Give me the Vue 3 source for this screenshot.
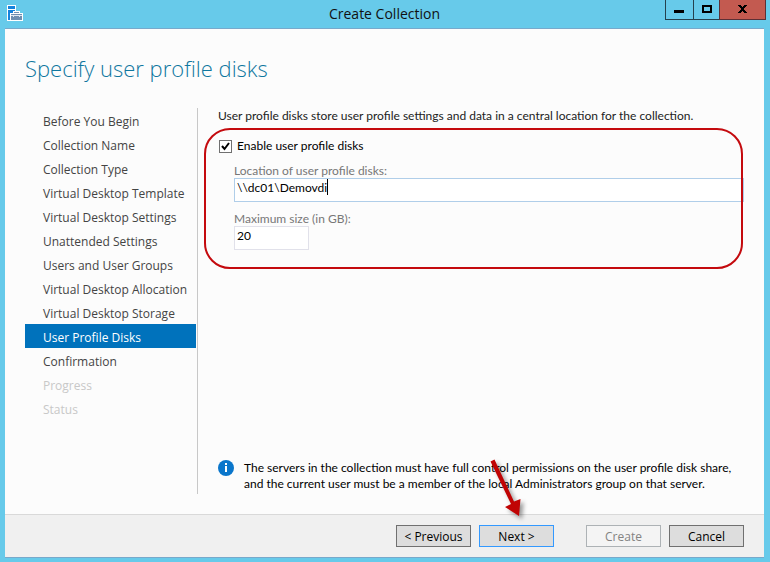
<script setup>
import { ref } from 'vue'

const steps = [
  { name: 'Before You Begin' },
  { name: 'Collection Name' },
  { name: 'Collection Type' },
  { name: 'Virtual Desktop Template' },
  { name: 'Virtual Desktop Settings' },
  { name: 'Unattended Settings' },
  { name: 'Users and User Groups' },
  { name: 'Virtual Desktop Allocation' },
  { name: 'Virtual Desktop Storage' },
  { name: 'User Profile Disks', current: true },
  { name: 'Confirmation' },
  { name: 'Progress', pending: true },
  { name: 'Status', pending: true },
]

const enabled = ref(true)
const location = ref('\\\\dc01\\Demovdi')
const maxSize = ref('20')
</script>

<template>
  <div class="window">
    <header class="titlebar">
      <svg class="app-icon" width="18" height="18" viewBox="0 0 18 18" aria-hidden="true">
        <path d="M1 1h9v6h4v2h3v8H1z" fill="#fff" />
        <path d="M2 2h7v3H2zM2 6h7v1H7v2H4v7H2z" fill="#1583dc" />
        <path d="M5 10h11v6H5zM8 8h5v1H8z" fill="#6f8fb0" />
        <path d="M5 11h11v1H5zM7 12h1v1H7zM13 12h1v1h-1z" fill="#dfe9f2" />
      </svg>
      <span class="title">Create Collection</span>
      <div class="controls">
        <button type="button" class="control" aria-label="Minimize">
          <svg width="27" height="19" viewBox="0 0 27 19"><path d="M8 10h10v3H8z" fill="#000" /></svg>
        </button>
        <button type="button" class="control" aria-label="Maximize">
          <svg width="25" height="19" viewBox="0 0 25 19"><path d="M8 5h10v8H8zM10 7v4h6V7z" fill="#000" fill-rule="evenodd" /></svg>
        </button>
        <button type="button" class="control close" aria-label="Close">
          <svg width="45" height="19" viewBox="0 0 45 19">
            <path d="M18 5h3v1h1v1h1V6h1V5h3v1h-1v1h-1v1h-1v2h1v1h1v1h1v1h-3v-1h-1v-1h-1v1h-1v1h-3v-1h1v-1h1v-1h1V8h-1V7h-1V6h-1z" fill="#000" />
          </svg>
        </button>
      </div>
    </header>

    <div class="panel">
      <h1>Specify user profile disks</h1>
      <div class="body">
        <nav aria-label="Steps">
          <ol>
            <li v-for="s in steps" :key="s.name" :class="{ current: s.current, pending: s.pending }">{{ s.name }}</li>
          </ol>
        </nav>
        <main>
          <p class="intro">User profile disks store user profile settings and data in a central location for the collection.</p>
          <section class="settings">
            <label class="enable">
              <span class="tick">
                <input v-model="enabled" type="checkbox" />
                <svg v-if="enabled" width="13" height="13" viewBox="0 0 13 13"><path d="M3 6l2.500 3L10 3" fill="none" stroke="#000" stroke-width="2" /></svg>
              </span>
              Enable user profile disks
            </label>
            <div class="field">
              <label for="location">Location of user profile disks:</label>
              <div class="entry">
                <input id="location" v-model="location" type="text" class="focused" />
                <span class="caret"></span>
              </div>
            </div>
            <div class="field">
              <label for="size">Maximum size (in GB):</label>
              <input id="size" v-model="maxSize" type="text" class="short" />
            </div>
            <div class="outline"></div>
          </section>
          <div class="notice">
            <svg width="16" height="16" viewBox="0 0 16 16" aria-hidden="true">
              <circle cx="8" cy="8" r="8" fill="#0a76cb" />
              <path d="M7 3h2v2H7zM7 6h2v6H7z" fill="#fff" />
            </svg>
            <p>The servers in the collection must have full control permissions on the user profile disk share, and the current user must be a member of the local Administrators group on that server.</p>
          </div>
        </main>
      </div>
      <footer>
        <button type="button" class="action">&lt; Previous</button>
        <div class="next">
          <button type="button" class="action default">Next &gt;</button>
          <svg class="arrow" width="48" height="72" viewBox="0 0 48 72" aria-hidden="true">
            <path d="M10.500 7.500L14.500 5.500L34 47.500L40.500 45L39 62L25 53L31 50z" fill="#c00404" />
          </svg>
        </div>
        <button type="button" class="action create" disabled>Create</button>
        <button type="button" class="action">Cancel</button>
      </footer>
    </div>
  </div>
</template>

<style>
body {
  margin: 0;
}
</style>

<style scoped>
* {
  box-sizing: border-box;
}
.window {
  display: flex;
  flex-direction: column;
  min-height: 100vh;
  padding: 0 6px 4px 5px;
  background: #67caea;
  font-family: "Open Sans", "Noto Sans", sans-serif;
  font-size: 12px;
  line-height: 16px;
  color: #222;
}
button,
input {
  font: inherit;
  margin: 0;
}
.titlebar {
  display: grid;
  grid-template-columns: 1fr auto 1fr;
  height: 28px;
}
.app-icon {
  margin: 4px 0 0 1px;
}
.title {
  font-size: 14px;
  line-height: 28px;
  color: #111;
}
.controls {
  display: flex;
  justify-self: end;
  align-self: start;
  margin-right: -2px;
}
.control {
  display: flex;
  padding: 0;
  border: solid #25414d;
  border-width: 0 0 1px 1px;
  background: transparent;
}
.close {
  border-right-width: 1px;
  border-color: #5c3036;
  background: #c35a50;
}
.panel {
  flex: 1;
  display: flex;
  flex-direction: column;
  border-top: 1px solid #78a9cb;
  border-bottom: 1px solid #78a9cb;
  background: #fcfcfc;
}
h1 {
  margin: 23px 20px 24px;
  font-size: 22px;
  line-height: 32px;
  font-weight: 300;
  color: #0f779f;
}
.body {
  flex: 1;
  display: grid;
  grid-template-columns: 173px 1fr;
  margin: 0 20px 20px;
}
nav {
  padding-right: 1px;
  border-right: 1px solid #c8c8c8;
}
ol {
  margin: 0;
  padding: 0;
  list-style: none;
}
li {
  padding: 4px 0 0 18px;
  line-height: 20px;
  color: #444;
  white-space: nowrap;
}
.current {
  background: #0072bc;
  color: #fff;
}
.pending {
  color: #c8c8c8;
}
main {
  display: flex;
  flex-direction: column;
  padding-left: 20px;
  font-family: Lato, "Open Sans", sans-serif;
}
p {
  margin: 0;
}
.intro {
  white-space: nowrap;
}
.settings {
  position: relative;
  display: flex;
  flex-direction: column;
  gap: 9px;
  margin-top: 14px;
  color: #000;
}
.enable {
  display: flex;
  align-items: center;
  gap: 5px;
  padding-left: 1px;
}
.tick {
  position: relative;
  display: flex;
}
.tick input {
  appearance: none;
  width: 13px;
  height: 13px;
  border: 1px solid #707070;
  background: #fff;
}
.tick svg {
  position: absolute;
  inset: 0;
  pointer-events: none;
}
.field {
  display: flex;
  flex-direction: column;
  padding-left: 16px;
}
.field label {
  line-height: 15px;
  color: #777;
}
.entry {
  position: relative;
  display: flex;
}
.field input {
  width: 100%;
  height: 24px;
  padding: 0 2px 6px;
  border: 1px solid #e1e1ea;
  border-radius: 0;
  outline: 0;
  background: #fff;
  color: #000;
}
.field .focused {
  border-color: #b0cee9;
}
.field .short {
  width: 75px;
}
.caret {
  position: absolute;
  top: 1px;
  left: 93px;
  width: 1px;
  height: 16px;
  background: #000;
}
.outline {
  position: absolute;
  inset: -10px 1px -19px -14px;
  border: 2px solid #c40a0e;
  border-radius: 26px;
  pointer-events: none;
}
.notice {
  display: flex;
  gap: 10px;
  margin-top: auto;
  margin-bottom: 2px;
  color: #000;
}
.notice svg {
  flex: none;
}
footer {
  display: flex;
  justify-content: flex-end;
  gap: 8px;
  padding: 10px 20px;
  border-top: 1px solid #d9d9d9;
  background: #f0f0f0;
}
.action {
  width: 75px;
  height: 22px;
  padding: 1px 0 0;
  border: 1px solid #707070;
  background: #ddd;
  color: #000;
}
.default {
  border-color: #3399ff;
}
.next {
  position: relative;
}
.create {
  margin-left: 24px;
  border-color: #adb2b5;
  background: #f4f4f4;
  color: #838383;
}
.arrow {
  position: absolute;
  left: 1px;
  top: -71px;
  filter: drop-shadow(3px 3px 2px rgba(0, 0, 0, 0.4));
  pointer-events: none;
}
</style>
